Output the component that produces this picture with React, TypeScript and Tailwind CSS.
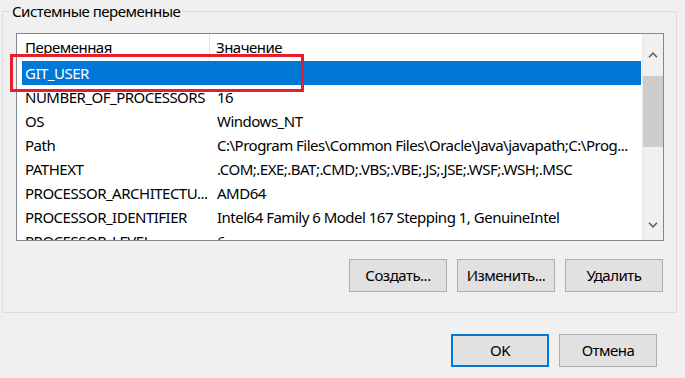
import React from "react";

const rows: [string, string][] = [
  ["GIT_USER", ""],
  ["NUMBER_OF_PROCESSORS", "16"],
  ["OS", "Windows_NT"],
  ["Path", "C:\\Program Files\\Common Files\\Oracle\\Java\\javapath;C:\\Prog..."],
  ["PATHEXT", ".COM;.EXE;.BAT;.CMD;.VBS;.VBE;.JS;.JSE;.WSF;.WSH;.MSC"],
  ["PROCESSOR_ARCHITECTU...", "AMD64"],
  ["PROCESSOR_IDENTIFIER", "Intel64 Family 6 Model 167 Stepping 1, GenuineIntel"],
  ["PROCESSOR_LEVEL", "6"],
];

function Chevron({ up }: { up?: boolean }) {
  return (
    <svg width="10" height="6" viewBox="0 0 10 6" className="block">
      <path
        d={up ? "M1 5.2 L5 1.2 L9 5.2" : "M1 0.8 L5 4.8 L9 0.8"}
        fill="none"
        stroke="#606060"
        strokeWidth="1.6"
      />
    </svg>
  );
}

function Btn({ label, primary }: { label: string; primary?: boolean }) {
  return (
    <button
      className={
        primary
          ? "w-[98px] h-[33px] bg-[#e1e1e1] border-2 border-[#0078d7] text-black"
          : "w-[98px] h-[33px] bg-[#e1e1e1] border border-[#adadad] text-black"
      }
    >
      {label}
    </button>
  );
}

export default function App() {
  return (
    <div
      className="relative w-[685px] h-[378px] bg-[#f0f0f0] text-[15px] tracking-[-0.5px] text-black overflow-hidden"
      style={{ fontFamily: '"Noto Sans", "Open Sans", sans-serif' }}
    >
      <div className="pt-[1px] pl-[2px] pr-[8px]">
        <fieldset className="border border-[#dcdcdc] px-0 pb-[20px]">
          <legend className="ml-[7px] px-[2px] leading-[20px]">Системные переменные</legend>

          {/* список */}
          <div className="mt-[12px] ml-[13px] w-[648px] h-[208px] border border-[#828790] bg-white flex overflow-hidden">
            <div className="flex-1 flex flex-col">
              <div className="h-[27px] shrink-0 flex items-center">
                <div className="w-[193px] h-full pl-[8px] flex items-center border-r border-[#e5e5e5]">
                  Переменная
                </div>
                <div className="pl-[6px]">Значение</div>
              </div>
              {rows.map(([name, value], i) => (
                <div
                  key={name}
                  className={
                    i === 0
                      ? "h-[24px] shrink-0 ml-[5px] mr-[1px] flex items-center bg-[#0078d7] text-white"
                      : "h-[24px] shrink-0 ml-[5px] mr-[1px] flex items-center"
                  }
                >
                  <div className="w-[192px] pl-[3px] whitespace-nowrap overflow-hidden">{name}</div>
                  <div className="pl-[3px] whitespace-nowrap">{value}</div>
                </div>
              ))}
            </div>
            {/* полоса прокрутки */}
            <div className="w-[21px] shrink-0 bg-[#f0f0f0] border-l border-[#e8e8e8] flex flex-col">
              <div className="h-[42px] flex items-center justify-center">
                <Chevron up />
              </div>
              <div className="h-[71px] bg-[#cdcdcd]" />
              <div className="flex-1" />
              <div className="h-[24px] flex items-center justify-center pb-[6px]">
                <Chevron />
              </div>
            </div>
          </div>

          <div className="mt-[18px] ml-[346px] flex gap-[10px]">
            <Btn label="Создать..." />
            <Btn label="Изменить..." />
            <Btn label="Удалить" />
          </div>
        </fieldset>
      </div>

      <div className="mt-[21px] pr-[28px] flex justify-end gap-[10px]">
        <Btn label="OK" primary />
        <Btn label="Отмена" />
      </div>

      {/* красная рамка */}
      <div className="absolute left-[10px] top-[54px] w-[294px] h-[38px] border-[3px] border-[#e81c2a]" />
    </div>
  );
}
